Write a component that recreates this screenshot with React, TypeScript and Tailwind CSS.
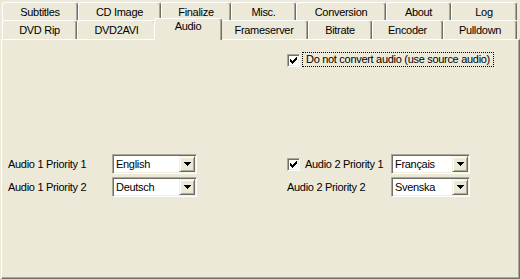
const topTabs = [
  { label: "Subtitles", w: "w-[76px]" },
  { label: "CD Image", w: "w-[83px]" },
  { label: "Finalize", w: "w-[70px]" },
  { label: "Misc.", w: "w-[65px]" },
  { label: "Conversion", w: "w-[90px]" },
  { label: "About", w: "w-[65px]" },
  { label: "Log", w: "w-[66px]" },
];

const bottomTabs = [
  { label: "DVD Rip", w: "w-[75px]" },
  { label: "DVD2AVI", w: "w-[79px]" },
  { label: "Audio", w: "w-[68px]", selected: true },
  { label: "Frameserver", w: "w-[88px]" },
  { label: "Bitrate", w: "w-[64px]" },
  { label: "Encoder", w: "w-[71px]" },
  { label: "Pulldown", w: "w-[74px]" },
];

const raised =
  "border-l border-t border-white border-r border-r-[#716F64] rounded-t-[3px] shadow-[inset_-1px_0_0_#ACA899]";

function Tab({ label, w, selected }: { label: string; w: string; selected?: boolean }) {
  if (selected) {
    return (
      <div
        className={`${w} relative z-10 -mx-[2px] -mt-[2px] h-[22px] bg-[#ECE9D8] ${raised} flex justify-center pt-[2px]`}
      >
        {label}
      </div>
    );
  }
  return (
    <div className={`${w} h-full bg-[#ECE9D8] ${raised} flex items-center justify-center pt-[1px]`}>
      {label}
    </div>
  );
}

function CheckMark() {
  return (
    <svg width="9" height="9" viewBox="0 0 9 9" shapeRendering="crispEdges">
      <rect x="7" y="1" width="1" height="1" fill="#000" />
      <rect x="6" y="2" width="2" height="1" fill="#000" />
      <rect x="1" y="3" width="1" height="1" fill="#000" />
      <rect x="5" y="3" width="3" height="1" fill="#000" />
      <rect x="1" y="4" width="2" height="1" fill="#000" />
      <rect x="4" y="4" width="3" height="1" fill="#000" />
      <rect x="1" y="5" width="5" height="1" fill="#000" />
      <rect x="2" y="6" width="3" height="1" fill="#000" />
      <rect x="3" y="7" width="1" height="1" fill="#000" />
    </svg>
  );
}

function Checkbox() {
  return (
    <div className="w-[13px] h-[13px] shrink-0 bg-white border border-t-[#ACA899] border-l-[#ACA899] border-r-white border-b-white shadow-[inset_1px_1px_0_#716F64,inset_-1px_-1px_0_#F1EFE2] p-[1px]">
      <CheckMark />
    </div>
  );
}

function Combo({ value, w }: { value: string; w: string }) {
  return (
    <div
      className={`${w} h-[20px] shrink-0 flex bg-white border border-t-[#ACA899] border-l-[#ACA899] border-r-white border-b-white shadow-[inset_1px_1px_0_#716F64,inset_-1px_-1px_0_#F1EFE2] p-[1px]`}
    >
      <div className="flex-1 flex items-center pl-[2px]">{value}</div>
      <div className="w-[16px] h-[16px] bg-[#ECE9D8] border border-t-[#F1EFE2] border-l-[#F1EFE2] border-r-[#716F64] border-b-[#716F64] shadow-[inset_1px_1px_0_#fff,inset_-1px_-1px_0_#ACA899] flex items-center justify-center">
        <svg width="7" height="4" viewBox="0 0 7 4" shapeRendering="crispEdges">
          <rect x="0" y="0" width="7" height="1" fill="#000" />
          <rect x="1" y="1" width="5" height="1" fill="#000" />
          <rect x="2" y="2" width="3" height="1" fill="#000" />
          <rect x="3" y="3" width="1" height="1" fill="#000" />
        </svg>
      </div>
    </div>
  );
}

export default function App() {
  return (
    <div className="w-[520px] h-[279px] overflow-hidden bg-[#ECE9D8] flex flex-col text-black text-[11px] tracking-[-0.3px] leading-none font-['Liberation_Sans',Arial,sans-serif]">
      <div className="h-[39px] shrink-0 pt-[2px] px-[2px] flex flex-col">
        <div className="h-[18px] flex">
          {topTabs.map((t) => (
            <Tab key={t.label} label={t.label} w={t.w} />
          ))}
        </div>
        <div className="h-[19px] flex items-start">
          {bottomTabs.map((t) => (
            <Tab key={t.label} label={t.label} w={t.w} selected={t.selected} />
          ))}
        </div>
      </div>

      <div className="flex-1 ml-[1px] border-t border-l border-white border-r border-b border-r-[#716F64] border-b-[#716F64] shadow-[inset_-1px_-1px_0_#ACA899] pl-[6px] pt-[12px]">
        <div className="grid grid-cols-[279px_1fr]">
          <div />
          <div className="flex items-start h-[15px]">
            <div className="mt-[2px]">
              <Checkbox />
            </div>
            <div className="ml-[2px] h-[15px] border border-dotted border-black px-[3px] flex items-center">
              Do not convert audio (use source audio)
            </div>
          </div>
        </div>

        <div className="mt-[87px] grid grid-cols-[279px_1fr] gap-y-[3px]">
          <div className="flex items-center">
            <div className="w-[104px]">Audio 1 Priority 1</div>
            <Combo value="English" w="w-[85px]" />
          </div>
          <div className="flex items-center">
            <Checkbox />
            <div className="w-[91px] pl-[5px]">Audio 2 Priority 1</div>
            <Combo value="Français" w="w-[79px]" />
          </div>
          <div className="flex items-center">
            <div className="w-[104px]">Audio 1 Priority 2</div>
            <Combo value="Deutsch" w="w-[85px]" />
          </div>
          <div className="flex items-center">
            <div className="w-[104px]">Audio 2 Priority 2</div>
            <Combo value="Svenska" w="w-[79px]" />
          </div>
        </div>
      </div>
    </div>
  );
}
